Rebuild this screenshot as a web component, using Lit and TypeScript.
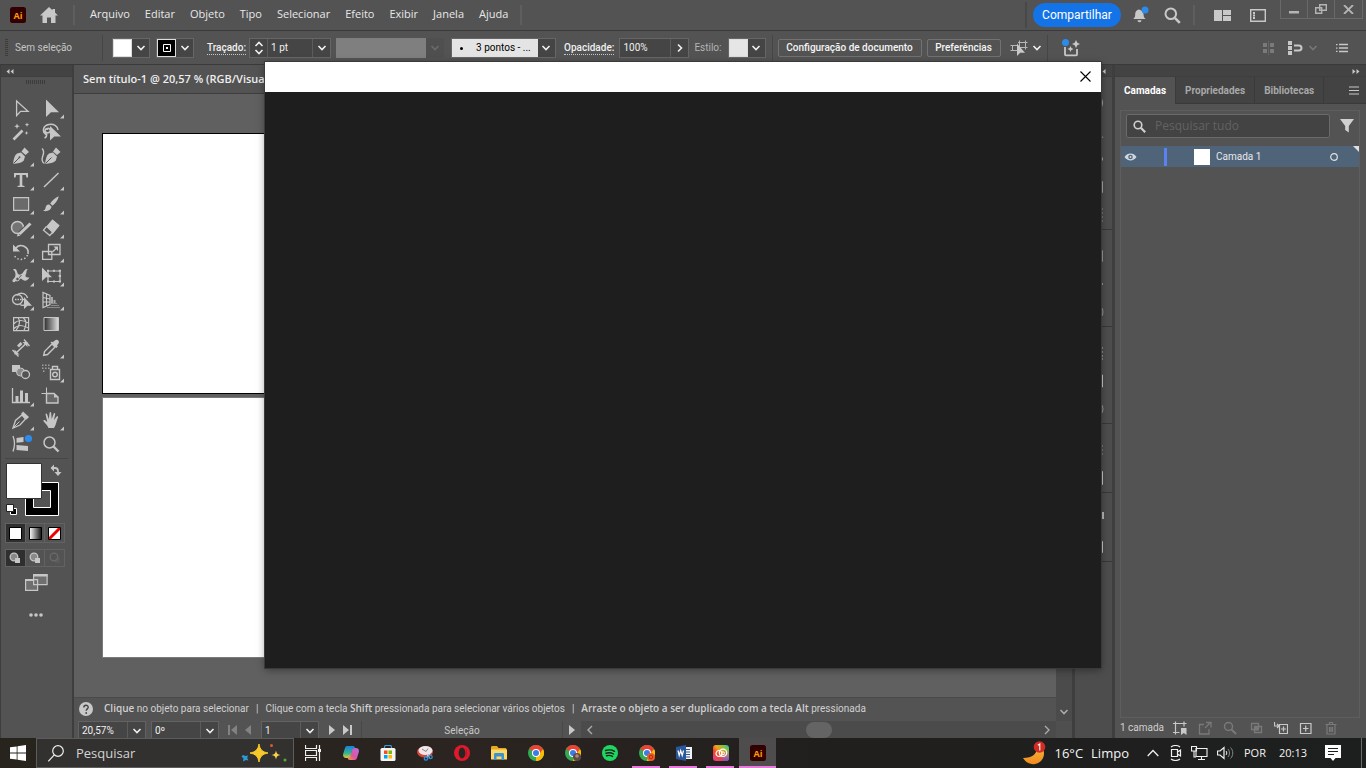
import { LitElement, html, svg, css, nothing, type TemplateResult } from "lit";
import { customElement } from "lit/decorators.js";
import { classMap } from "lit/directives/class-map.js";

const base = css`
  :host {
    display: block;
    box-sizing: border-box;
    min-width: 0;
    color: #dcdcdc;
    font-family: Roboto, "Open Sans", sans-serif;
    font-size: 10px;
    line-height: 14px;
  }
  *, *::before, *::after { box-sizing: border-box; }
  button, input, select {
    font: inherit;
    color: inherit;
    margin: 0;
    padding: 0;
    border: 0;
    background: none;
    border-radius: 0;
    min-width: 0;
  }
  a { color: inherit; text-decoration: none; }
  svg { display: block; flex: none; }
`;

const icon = (w: number, h: number, body: unknown) =>
  html`<svg width=${w} height=${h} viewBox="0 0 ${w} ${h}" fill="none" stroke="none" aria-hidden="true">${body}</svg>`;

const chevron = icon(10, 6, svg`<path d="M1.500 1 5 4.500 8.500 1" stroke="currentColor" stroke-width="1.600"/>`);

const aiLogo = (size: number) => html`<svg width=${size} height=${size} viewBox="0 0 16 16" aria-hidden="true">
  <rect width="16" height="16" rx="2.500" fill="#330000"/>
  <text x="8" y="11.500" text-anchor="middle" font-family="Open Sans, sans-serif" font-weight="700" font-size="9" fill="#ff9a00">Ai</text>
</svg>`;

/* ---------- title bar ---------- */

@customElement("title-bar")
class TitleBar extends LitElement {
  static styles = [base, css`
    :host {
      display: flex;
      align-items: flex-start;
      height: 31px;
      padding-left: 10px;
      padding-right: 3px;
      background: #535353;
      border-bottom: 1px solid #3a3a3a;
      font-family: "Open Sans", sans-serif;
      font-size: 11px;
    }
    .group { display: flex; align-items: center; height: 30px; }
    .home { margin-left: 13px; }
    .bar { width: 2px; height: 20px; background: #5e5e5e; }
    .home + .bar { margin-left: 14px; }
    nav { display: flex; gap: 15px; padding: 0 12px 2px 15px; line-height: 16px; color: #e8e8e8; }
    .spacer { flex: 1; }
    .dark { width: 2px; height: 26px; background: #484848; margin-right: 6px; }
    .share {
      width: 88px;
      height: 24px;
      border-radius: 12px;
      background: #1473e6;
      color: #fff;
      font-size: 12px;
      font-family: Roboto, sans-serif;
    }
    .bell { margin-left: 11px; }
    .find { margin-left: 14px; margin-right: 12px; }
    .layout { margin-left: 19px; }
    .win { display: flex; height: 19px; margin-left: 14px; border: 1px solid #696969; border-top: 0; }
    .win button { width: 27px; display: grid; place-items: center; border-right: 1px solid #696969; }
    .win button:last-child { border: 0; }
  `];
  render() {
    const menus = ["Arquivo", "Editar", "Objeto", "Tipo", "Selecionar", "Efeito", "Exibir", "Janela", "Ajuda"];
    return html`
      <div class="group">
        ${aiLogo(16)}
        <button class="home" aria-label="Início">${icon(20, 18, svg`<path d="M10 1 1 9.500h2.500V17h4.500v-5.500h4V17h4.500V9.500H19L16 6.600V3h-2.500v1.300z" fill="#c8c8c8"/>`)}</button>
        <div class="bar"></div>
        <nav>${menus.map((m) => html`<a href="#">${m}</a>`)}</nav>
        <div class="bar"></div>
      </div>
      <div class="spacer"></div>
      <div class="group">
        <div class="dark"></div>
        <button class="share">Compartilhar</button>
        <button class="bell" aria-label="Notificações">${icon(18, 18, svg`
          <path d="M7 3.500c-3 .6-3.800 3-3.800 5.300 0 2-.6 3-2 4.200h12.400c-1.400-1.200-2-2.200-2-4.200C11.600 6.500 10 4 7 3.500zM5.500 14.200h4a2 2 0 0 1-4 0z" fill="#c8c8c8"/>
          <circle cx="13" cy="4" r="3.500" fill="#2d8ceb"/>`)}</button>
        <button class="find" aria-label="Pesquisar">${icon(17, 17, svg`<circle cx="6.800" cy="6.800" r="5.300" stroke="#c8c8c8" stroke-width="2"/><path d="m10.800 10.800 5 5" stroke="#c8c8c8" stroke-width="2.600"/>`)}</button>
        <div class="bar"></div>
        <button class="layout" aria-label="Organizar documentos">${icon(17, 11, svg`<path d="M0 0h8v11H0zM9 0h8v5H9zM9 6h8v5H9z" fill="#c8c8c8"/>`)}</button>
        <button class="layout" aria-label="Espaço de trabalho">${icon(16, 13, svg`<path d="M.7.700h14.600v11.600H.7z" stroke="#c8c8c8" stroke-width="1.400"/><path d="M3 3h2v2H3zM3 5.500h2v2H3zM3 8h2v2H3z" fill="#c8c8c8"/>`)}</button>
      </div>
      <div class="win">
        <button aria-label="Minimizar">${icon(10, 9, svg`<path d="M0 6h10v2.500H0z" fill="#b4b4b4"/>`)}</button>
        <button aria-label="Restaurar">${icon(12, 10, svg`<path d="M4.700.700h6.600v5.600H4.700zM.7 3.700h6v5.600h-6z" stroke="#b4b4b4" stroke-width="1.400"/>`)}</button>
        <button aria-label="Fechar">${icon(11, 9, svg`<path d="m1 0 9 9M10 0 1 9" stroke="#b4b4b4" stroke-width="1.800"/>`)}</button>
      </div>`;
  }
}

/* ---------- control bar ---------- */

@customElement("control-bar")
class ControlBar extends LitElement {
  static styles = [base, css`
    :host {
      display: flex;
      align-items: center;
      height: 34px;
      padding: 0 18px 0 5px;
      background: #535353;
      border-bottom: 1px solid #3a3a3a;
    }
    .grip { width: 3px; height: 18px; background: repeating-linear-gradient(#3c3c3c 0 1px, #535353 1px 2px); }
    .state { width: 87px; margin-left: 7px; color: #c4c4c4; }
    .sep { width: 1px; height: 26px; background: #464646; }
    .box { display: flex; height: 20px; border: 1px solid #666; background: #454545; }
    .arrow { width: 18px; display: grid; place-items: center; color: #f0f0f0; }
    .swatch { width: 20px; background: #fff; border: 1px solid #ddd; display: grid; place-items: center; }
    .fill { width: 38px; margin-left: 9px; }
    .stroke { width: 38px; margin: 0 13px 0 6px; }
    .stroke .swatch { background: #000; }
    .link { border-bottom: 1px dotted #c8c8c8; line-height: 13px; color: #f0f0f0; font-weight: 500; }
    .weight { width: 82px; margin-left: 3px; }
    .step { width: 18px; display: flex; flex-direction: column; align-items: center; justify-content: space-evenly; border-right: 1px solid #5c5c5c; color: #f0f0f0; }
    .step button { display: block; }
    .flip { transform: scaleY(-1); }
    input { flex: 1; width: 0; padding-left: 3px; color: #f0f0f0; }
    input + .arrow { border-left: 1px solid #5c5c5c; }
    .profile { display: flex; width: 108px; height: 20px; margin-left: 5px; background: linear-gradient(90deg, #7f7f7f 90px, #4f4f4f 90px); justify-content: flex-end; }
    .profile .arrow { color: #6b6b6b; }
    .brush { position: relative; width: 105px; margin: 0 8px 0 7px; }
    .brush select { appearance: none; flex: 1; background: linear-gradient(90deg, #e4e4e4 86px, #454545 86px); color: #000; padding-left: 24px; }
    .brush .dot { position: absolute; left: 8px; top: 8px; width: 3px; height: 3px; border-radius: 2px; background: #000; pointer-events: none; }
    .brush svg { position: absolute; right: 4px; top: 6px; color: #f0f0f0; pointer-events: none; }
    .opacity { width: 70px; margin: 0 5px 0 5px; }
    .dim { color: #b4b4b4; }
    .style { width: 38px; margin: 0 6px 0 6px; }
    .style .swatch { background: #e6e6e6; }
    .wide { height: 18px; border: 1px solid #727272; border-radius: 2px; color: #f4f4f4; font-weight: 500; }
    .doc { width: 144px; margin: 0 5px; }
    .pref { width: 74px; margin-right: 9px; }
    .iso { margin-right: 4px; }
    .iso + .arrow { width: 10px; margin-right: 5px; }
    .ai { margin-left: 14px; }
    .spacer { flex: 1; }
    .tail { display: flex; align-items: center; }
    .snap { margin: 0 4px 0 12px; }
    .gray { color: #777; margin-right: 18px; }
  `];
  render() {
    return html`
      <div class="grip"></div>
      <span class="state">Sem seleção</span>
      <div class="sep"></div>
      <button class="box fill" aria-label="Preenchimento"><span class="swatch"></span><span class="arrow">${chevron}</span></button>
      <button class="box stroke" aria-label="Cor do traçado"><span class="swatch">${icon(8, 8, svg`<path d="M.5.500h7v7h-7z" stroke="#fff"/><path d="M3 3h2v2H3z" fill="#fff"/>`)}</span><span class="arrow">${chevron}</span></button>
      <label class="link" for="weight">Traçado:</label>
      <div class="box weight">
        <span class="step"><button class="flip" aria-label="Aumentar">${chevron}</button><button aria-label="Diminuir">${chevron}</button></span>
        <input id="weight" value="1 pt">
        <button class="arrow" aria-label="Espessuras">${chevron}</button>
      </div>
      <button class="profile" disabled aria-label="Perfil de largura"><span class="arrow">${chevron}</span></button>
      <div class="box brush">
        <span class="dot"></span>
        <select aria-label="Pincel"><option>3 pontos - ...</option></select>
        ${chevron}
      </div>
      <label class="link" for="opacity">Opacidade:</label>
      <div class="box opacity">
        <input id="opacity" value="100%">
        <button class="arrow" aria-label="Opacidade">${icon(6, 10, svg`<path d="M1 1.500 4.500 5 1 8.500" stroke="currentColor" stroke-width="1.600"/>`)}</button>
      </div>
      <span class="dim">Estilo:</span>
      <button class="box style" aria-label="Estilo"><span class="swatch"></span><span class="arrow">${chevron}</span></button>
      <div class="sep"></div>
      <button class="wide doc">Configuração de documento</button>
      <button class="wide pref">Preferências</button>
      <button class="iso" aria-label="Selecionar objetos similares">${icon(18, 16, svg`
        <path d="M2.500 5.500h5v5h-5zM9.500 2.500h6v5h-6z" stroke="#b8b8b8"/><path d="M.5 5.500h2M.5 10.500h2M9.500.500v2M15.500.500v2M15.500 7.500v2M8 2.500h2M15.500 2.500h2M15.500 7.500h2" stroke="#b8b8b8"/>
        <path d="M7 3.500v12.500l3.200-3.200H15z" fill="#c8c8c8"/>`)}</button>
      <button class="arrow" aria-label="Opções">${chevron}</button>
      <div class="sep"></div>
      <button class="ai" aria-label="Gerar">${icon(20, 18, svg`
        <path d="M3 8v7.500c0 .6.200.8.800.8h10.400c.6 0 .8-.2.800-.8V10" stroke="#c8c8c8" stroke-width="1.800"/>
        <path d="m14 1 1.300 2.700L18 5l-2.700 1.300L14 9l-1.300-2.700L10 5l2.700-1.300zM8.500 7l.9 2.100 2.100.9-2.100.9L8.500 13l-.9-2.100-2.100-.9 2.100-.9z" fill="#c8c8c8"/>
        <circle cx="3.500" cy="3.500" r="3.500" fill="#2d8ceb"/>`)}</button>
      <div class="spacer"></div>
      <div class="tail">
        ${icon(14, 14, svg`<path d="M1 2h4v4H1zM8 2h4v4H8zM1 8h4v4H1zM8 8h4v4H8z" fill="#7a7a7a"/><path d="M6.500 0v14" stroke="#686868" stroke-width=".8"/>`)}
        <button class="snap" aria-label="Ajustar">${icon(16, 14, svg`<path d="M0 0h4v4H0zM0 5h4v4H0zM0 10h4v4H0z" fill="#c8c8c8"/><path d="M6 4.500h5a2.400 2.400 0 0 1 0 5H6" stroke="#c8c8c8" stroke-width="2"/>`)}</button>
        <span class="gray">${chevron}</span>
        <button aria-label="Menu">${icon(12, 10, svg`<path d="M3 1.500h9M3 5h9M3 8.500h9" stroke="#c8c8c8" stroke-width="1.400"/><path d="M0 1h1.500v1.300H0zM0 4.400h1.500v1.300H0zM0 7.800h1.500v1.300H0z" fill="#c8c8c8"/>`)}</button>
      </div>`;
  }
}

/* ---------- tools ---------- */

const G = "#c6c6c6";
type Tool = { name: string; art: TemplateResult<2>; more?: boolean };

const tools: Tool[] = [
  { name: "Seleção", art: svg`<path d="M10.600 5v14.500l4-4.200H22z" stroke=${G} stroke-width="1.300"/>` },
  { name: "Seleção direta", more: true, art: svg`<path d="M10 3.500V21l5-4.800h8z" fill=${G}/>` },
  { name: "Varinha mágica", art: svg`<path d="m7.500 19.500 9-9" stroke=${G} stroke-width="2.600"/><path d="m18.500 6 2-2M11 3.500l.8 2 2 .8-2 .8-.8 2-.8-2-2-.8 2-.8zM21 2.500l.6 1.600 1.600.6-1.600.6L21 7l-.6-1.700-1.600-.6 1.600-.6zM20.500 11l.6 1.400 1.400.6-1.400.6-.6 1.400-.6-1.400-1.400-.6 1.400-.6z" fill=${G}/>` },
  { name: "Laço", art: svg`<path d="M10 14.500C6 12 6.500 5.500 13 4.500c5-.8 9 2 9 5.500M12 8.500c-3-.5-4 3-1.500 4s4.500-1 3.500-3-3-1-3 .5M10.500 12.500c.5 3-.5 5-2 5.500" stroke=${G} stroke-width="1.500"/><path d="M14 6v14.500l4.300-4H25z" fill=${G}/>` },
  { name: "Caneta", more: true, art: svg`<path d="M7 20c.5-4.500 1.500-8.500 4-10.500l4-1 4 4-1.200 4C16 19 11.500 19.500 7 20z" fill=${G}/><path d="m15.500 7.500 3-4 4.500 4.500-3.500 3z" fill=${G}/><path d="m7.500 19.500 6-6" stroke="#535353"/><circle cx="13.500" cy="13.300" r="1" fill="#535353"/>` },
  { name: "Curvatura", art: svg`<path d="M9 20c.5-4.500 1.500-8.500 4-10.500l4-1 4 4-1.200 4C18 19 13.500 19.500 9 20z" fill=${G}/><path d="m17 7.500 3-4 4.500 4.500-3.500 3z" fill=${G}/><path d="m9.500 19.500 6-6" stroke="#535353"/><path d="M6 4.500C9 7 7.500 10 6.500 13c-1 3-.5 5 2 6.500" stroke=${G} stroke-width="1.400"/>` },
  { name: "Texto", more: true, art: svg`<path d="M8 5h14v4.500h-1.500L19.800 7h-3.500v10.500l2.200.6V19h-7v-.9l2.200-.6V7h-3.500l-.7 2.500H8z" fill=${G}/>` },
  { name: "Segmento de linha", more: true, art: svg`<path d="M8 19 22.500 5" stroke=${G} stroke-width="1.500"/>` },
  { name: "Retângulo", more: true, art: svg`<path d="M7.600 5.600h15v12.800h-15z" fill="#6a6a6a" stroke=${G} stroke-width="1.200"/>` },
  { name: "Pincel", more: true, art: svg`<path d="M22.800 4.200c-3.500 1.300-6.500 4-8.600 7.300l2.300 2.300c3-2.700 5.500-5.800 6.300-9.600zM13.300 12.500c-2.500-.3-3.500 1.500-3.800 3.500-.2 1.300-1 2.200-2.500 2.800 4 1.200 8-.5 8.600-4z" fill=${G}/>` },
  { name: "Shaper", more: true, art: svg`<circle cx="11.500" cy="11.500" r="6" fill="#747474" stroke=${G} stroke-width="1.500"/><path d="m14 17.500 10.500-10" stroke="#535353" stroke-width="5"/><path d="m13.500 18 11-10.500" stroke=${G} stroke-width="3"/><path d="m10.800 20.500 1.200-3.200 2.500 2.200z" fill=${G}/>` },
  { name: "Borracha", more: true, art: svg`<path d="m16.500 3.500 7 6-7 8.500-7.200-6z" fill=${G}/><path d="m10.500 10.500-3 3.700 6.300 5.300 3-3.500" stroke=${G} fill="#535353" stroke-width="1.300"/><path d="m16.500 3.500 7 6-6.500 8-6.800-6.700z" fill=${G}/>` },
  { name: "Rotação", more: true, art: svg`<path d="M9.500 8.500a7 7 0 0 1 12.500 5.500" stroke=${G} stroke-width="1.600"/><path d="M21.500 15a7.200 7.200 0 0 1-13.500-.5" stroke=${G} stroke-width="1.500" stroke-dasharray="1.500 2"/><path d="M7 4.500v7h7z" fill=${G}/>` },
  { name: "Escala", more: true, art: svg`<path d="M12.500 4.500H24v10H12.500zM6.600 11.500h9.200v7.800H6.600z" stroke=${G} stroke-width="1.300"/><path d="m16.500 12 4-4" stroke=${G} stroke-width="1.300"/><path d="M17.500 6.500H22V11z" fill=${G}/>` },
  { name: "Largura", more: true, art: svg`<path d="M7 5.500c3.500-1.500 3.500 1 4.500 3.500s3.500 2 5.500-.5 2-4 5-3.500c-2 1-1 3-2 5s-1 3.500 3.500 3.500c-1.500 3-4.500 4-6.500 2.500s-2.500-2-4.500 0-4.500 3-6 1.500c-.5-2 1.500-2.500 2.500-4.500s.5-6-2-7.500z" fill=${G}/><path d="m8.500 19 7-8" stroke="#535353"/><circle cx="11.500" cy="15" r="1.800" stroke=${G} fill="#535353"/>` },
  { name: "Transformação livre", more: true, art: svg`<path d="M12 7h12v10.500H12z" stroke=${G} stroke-width="1.200"/><path d="M11 5.700h2v2h-2zM17 5.700h2v2h-2zM22.700 5.700h2.300v2h-2.300zM11 16.500h2v2h-2zM17 16.500h2v2h-2zM22.700 16.500h2.300v2h-2.300zM22.700 11h2.300v2h-2.300z" fill=${G}/><path d="M6 3.500V17l4-3.800h6z" fill=${G}/>` },
  { name: "Criador de formas", more: true, art: svg`<circle cx="11.500" cy="11.500" r="5" stroke=${G} stroke-width="1.300"/><path d="M9 11.500h10" stroke=${G} stroke-width="1.300" stroke-dasharray="1.500 1"/><path d="M11 7.500c2-3.500 9-3 10.500 2.500M14 16.500c1.500 1 3 1 4 .5" stroke=${G} stroke-width="1.400"/><path d="M18 9v12l3.500-3.300H26z" fill=${G}/>` },
  { name: "Grade de perspectiva", more: true, art: svg`<path d="M7 4.500v15l7-3V7.500zM7 9.500l7 1.500M7 14h7M10.500 6v11.500" stroke=${G} stroke-width="1.200"/><path d="M15 9h2v7h-2zM17.500 12h2v4h-2z" fill="#a8a8a8"/><path d="M15 17.500h8M11 19.500h13M15 15.500h6" stroke="#8a8a8a"/>` },
  { name: "Malha", art: svg`<path d="M7.600 5.600h15v13h-15zM7.500 12c5-5 9-4 15-1M7.500 17c5-5 9-4 15-1M12 5.500c3 4 1 9-2 13M17 5.500c5 4 3 9 1 13" stroke=${G} stroke-width="1.200"/>` },
  { name: "Gradiente", art: svg`<defs><linearGradient id="tg"><stop stop-color="#2c2c2c"/><stop offset="1" stop-color="#e0e0e0"/></linearGradient></defs><path d="M8 5.500h14.500v13H8z" fill="url(#tg)" stroke=${G}/>` },
  { name: "Dimensão", art: svg`<path d="m10 17 10-9.500" stroke=${G} stroke-width="1.500"/><path d="M8.500 13.500v5h5zM21.500 11V6h-5z" fill=${G}/><path d="m6.500 14 6 6.500M18 3.500l5.500 6.500" stroke=${G} stroke-width="1.300"/><path d="m11 9.500 2 2 3.500-3.500-2-2z" fill=${G}/>` },
  { name: "Conta-gotas", more: true, art: svg`<path d="m16 8-7.500 7.500-.8 3.800 3.800-.8L19 11z" stroke=${G} stroke-width="1.400"/><path d="m14.500 6.500 1.500-1 1 .8C18.500 4.500 20 3.300 21.600 4c2 1 1.800 3.500-.6 5.300l.8 1.200-1.500 1.500z" fill=${G}/>` },
  { name: "Mesclagem", art: svg`<path d="M6 5h8v7H6z" fill=${G}/><circle cx="14.500" cy="12" r="4" fill="#8a8a8a" stroke=${G}/><circle cx="19.500" cy="14.500" r="4" fill="#535353" stroke=${G} stroke-width="1.300"/>` },
  { name: "Pulverizador", more: true, art: svg`<path d="M14.500 9.500h9v10h-9zM16.500 9V6.500h5V9" stroke=${G} stroke-width="1.400"/><circle cx="19" cy="14.500" r="2.300" stroke=${G} stroke-width="1.400"/><path d="M6 4.500h1.500v1.500H6zM9 4.500h1.500v1.500H9zM12 4.500h1.500v1.500H12zM6 7.500h1.500v1.500H6zM9 7.500h1.500v1.500H9zM12 7.500h1.500v1.500H12zM7 10.500h1.500v1.500H7z" fill="#a0a0a0"/>` },
  { name: "Gráfico", more: true, art: svg`<path d="M6.500 4v14.500H24" stroke=${G} stroke-width="1.300"/><path d="M9.500 12h3v6h-3zM14 6.500h3V18h-3zM19 9h3v9h-3z" fill=${G}/>` },
  { name: "Prancheta", art: svg`<path d="M10.500 9.500H18l4 3.500v6H10.500z" fill="#686868" stroke=${G} stroke-width="1.400"/><path d="M10.500 3.500v6M5.500 9.500h5" stroke=${G}/><path d="M18 9v4.500h4.500z" fill=${G}/>` },
  { name: "Fatia", more: true, art: svg`<path d="m7 20 2.500-7.500L16 7l3.500 4-5.500 6z" stroke=${G} stroke-width="1.300"/><path d="m15 6 2-2.500L23 9l-2.500 2.500z" fill=${G}/><path d="m7.500 19.500 6-6" stroke=${G}/>` },
  { name: "Mão", more: true, art: svg`<path d="M12.500 20c-1-2.500-3-4.500-5-6.700-.5-1.200.8-1.600 1.600-1l2.200 1.800L9.600 6.500c-.2-1.200 1.200-1.300 1.500-.3l1.800 5L13.500 5c.1-1.200 1.600-1.200 1.700 0l.5 6 2-5.500c.4-1 1.700-.6 1.500.4L18 12l2.700-3.400c.7-.8 1.800-.1 1.300.9-1.500 3-1.800 7.500-4 10.500z" fill=${G}/>` },
  { name: "Páginas", art: svg`<path d="M7 4c2 5 2 10 0 15.500" stroke=${G} stroke-width="1.300"/><path d="m10.500 6 7-1v5l-7 .8zM10.500 13l11.500 1v5l-11.500-1z" fill=${G}/><circle cx="22.500" cy="6.500" r="3.600" fill="#2d8ceb"/>` },
  { name: "Zoom", art: svg`<circle cx="13.500" cy="10.500" r="5.500" stroke=${G} stroke-width="1.500"/><path d="m17.500 14.500 5 5" stroke=${G} stroke-width="2.400"/>` },
];

@customElement("tool-panel")
class ToolPanel extends LitElement {
  static styles = [base, css`
    :host {
      display: flex;
      flex-direction: column;
      width: 74px;
      background: #535353;
      border-left: 1px solid #3e3e3e;
      border-right: 2px solid #3e3e3e;
    }
    .head { height: 12px; padding: 4px 5px; background: #434343; border-bottom: 1px solid #3e3e3e; }
    .grip { width: 19px; height: 4px; margin: 3px auto 12px 25px; background: repeating-linear-gradient(90deg, #3c3c3c 0 1px, #535353 1px 2px); }
    .tools { display: grid; grid-template-columns: 30px 30px; padding-left: 5px; }
    .tools button { height: 24px; }
    .rule { height: 1px; margin: 2px 4px 4px; background: #464646; }
    .colors { margin-left: 5px; height: 56px; }
    .modes { display: flex; width: 60px; height: 20px; margin: 4px 0 6px 4px; border: 1px solid #626262; }
    .modes button { flex: 1; display: grid; place-items: center; border-right: 1px solid #626262; }
    .modes button:last-child { border: 0; }
    .modes .on { background: #2f2f2f; }
    .modes + .modes { margin-top: 0; height: 18px; }
    .screen { margin: 1px 0 0 24px; align-self: flex-start; }
    .dots { margin: 21px 0 0 28px; align-self: flex-start; }
  `];
  render() {
    return html`
      <div class="head">${icon(8, 5, svg`<path d="M3.500 0v5L.5 2.500zM7.500 0v5l-3-2.500z" fill="#c8c8c8"/>`)}</div>
      <div class="grip"></div>
      <div class="tools">
        ${tools.map((t) => html`<button aria-label=${t.name}>
          ${icon(30, 24, svg`${t.art}${t.more ? svg`<path d="M28 18.500v4h-4z" fill=${G}/>` : nothing}`)}
        </button>`)}
      </div>
      <div class="rule"></div>
      <div class="colors">${icon(56, 56, svg`
        <path d="M19.500 19.500h33v33h-33z" fill="#000" stroke="#fff"/><path d="M27.500 27.500h17v17h-17z" fill="#535353" stroke="#fff"/>
        <path d="M.5.500h35v35H.5z" fill="#fff" stroke="#333"/>
        <path d="M47 5h2a3 3 0 0 1 3 3v2" stroke=${G} stroke-width="1.800"/><path d="M48 1.500v7L44.500 5zM48.500 9h7L52 13z" fill=${G}/>
        <path d="M4.500 45.500h6v6h-6z" fill="#000" stroke="#fff"/><path d="M.5 41.500h7v7h-7z" fill="#fff" stroke="#222"/>`)}</div>
      <div class="modes">
        <button class="on" aria-label="Cor">${icon(13, 13, svg`<path d="M.5.500h12v12H.5z" fill="#fff" stroke="#000"/>`)}</button>
        <button aria-label="Gradiente">${icon(13, 13, svg`<defs><linearGradient id="mg"><stop stop-color="#fff"/><stop offset="1" stop-color="#111"/></linearGradient></defs><path d="M.5.500h12v12H.5z" fill="url(#mg)" stroke="#000"/>`)}</button>
        <button aria-label="Nenhum">${icon(13, 13, svg`<path d="M.5.500h12v12H.5z" fill="#fff"/><path d="m1 12 11-11" stroke="#f00000" stroke-width="3"/><path d="M.5.500h12v12H.5z" stroke="#000"/>`)}</button>
      </div>
      <div class="modes">
        ${[["#c6c6c6", "on"], ["#c6c6c6", ""], ["#6b6b6b", ""]].map(([c, on], i) => html`<button class=${on} aria-label="Modo de desenho ${i + 1}">
          ${icon(12, 12, svg`<circle cx="5" cy="5" r="3.800" fill="#8a8a8a" fill-opacity=${i === 2 ? 0 : 1} stroke=${c} stroke-width="1.300"/><path d="M6 6h5v5H6z" fill=${c} fill-opacity=${i === 2 ? 0.3 : 1}/>`)}
        </button>`)}
      </div>
      <button class="screen" aria-label="Modo de tela">${icon(23, 17, svg`<path d="M.6 5.600h12v10.800H.6zM8.600.600h13.500v10H8.600z" fill="#6f6f6f" stroke=${G} stroke-width="1.200"/><path d="M8.500.500h14v2h-14zM.5 5h8v2h-8z" fill=${G}/>`)}</button>
      <button class="dots" aria-label="Editar barra de ferramentas">${icon(14, 6, svg`<circle cx="2" cy="3" r="1.800" fill=${G}/><circle cx="7" cy="3" r="1.800" fill=${G}/><circle cx="12" cy="3" r="1.800" fill=${G}/>`)}</button>`;
  }
}

/* ---------- document ---------- */

@customElement("document-area")
class DocumentArea extends LitElement {
  static styles = [base, css`
    :host { display: grid; grid-template: 29px minmax(0, 1fr) 24px 17px / minmax(0, 1fr) 16px; background: #535353; overflow: hidden; }
    .tabs { grid-column: 1 / 3; border-bottom: 1px solid #3e3e3e; background: #434343; }
    .tab { display: inline-block; height: 28px; padding: 6px 24px 0 9px; background: #535353; color: #eee; font: 600 11px/16px "Open Sans", sans-serif; white-space: nowrap; }
    .canvas { position: relative; background: #606060; overflow: hidden; }
    .board { position: absolute; left: 28px; width: 464px; height: 261px; background: #fff; border: 1px solid #7a7a7a; }
    .first { top: 39px; border-color: #000; }
    .second { top: 303px; }
    .vscroll { grid-row: 2 / 4; grid-column: 2; background: #4b4b4b; display: flex; flex-direction: column; justify-content: flex-end; align-items: center; padding-bottom: 6px; color: #aaa; }
    .tips { display: flex; align-items: center; gap: 7px; padding: 0 0 2px 5px; border-top: 1px solid #4a4a4a; color: #d0d0d0; white-space: nowrap; }
    .tips svg { margin-right: 4px; }
    b { font-family: "Open Sans", sans-serif; font-weight: 600; }
    .status { display: flex; padding-left: 4px; overflow: hidden; }
    .combo { display: flex; flex: none; width: 68px; height: 20px; border: 1px solid #626262; background: #454545; color: #f0f0f0; margin-right: 5px; }
    .page { width: 58px; margin: 0 10px; }
    .combo input { flex: 1; width: 0; padding-left: 3px; }
    .combo button { width: 18px; display: grid; place-items: center; border-left: 1px solid #5c5c5c; }
    .nav { display: flex; align-items: center; gap: 8px; }
    .off { opacity: .4; margin-left: 4px; }
    .name { width: 202px; margin-left: 9px; padding-top: 3px; text-align: center; border: 1px solid #484848; border-width: 0 1px; color: #c8c8c8; }
    .play { width: 18px; display: grid; place-items: center; }
    .hscroll { flex: 1; display: flex; align-items: center; padding: 0 6px; background: #4b4b4b; color: #aaa; }
    .thumb { width: 26px; height: 16px; margin: 0 auto; border-radius: 8px; background: #646464; }
    .corner { background: #4f4f4f; }
  `];
  render() {
    const combo = (label: string, value: string, cls: string) => html`<div class="combo ${cls}">
      <input aria-label=${label} value=${value}><button aria-label="${label}: opções">${chevron}</button></div>`;
    const prev = icon(6, 10, svg`<path d="M6 0v10L0 5z" fill="#c8c8c8"/>`);
    const next = icon(6, 10, svg`<path d="M0 0v10l6-5z" fill="#c8c8c8"/>`);
    return html`
      <div class="tabs"><span class="tab">Sem título-1 @ 20,57 % (RGB/Visualização)</span></div>
      <div class="canvas"><div class="board first"></div><div class="board second"></div></div>
      <div class="vscroll">${chevron}</div>
      <div class="tips">
        ${icon(14, 14, svg`<circle cx="7" cy="7" r="7" fill="#c8c8c8"/><path d="M4.800 5.500C4.800 2.500 9.200 2.600 9.200 5.300 9.200 6.800 7.200 7 7.200 8.800" stroke="#444" stroke-width="1.400"/><circle cx="7.200" cy="11" r=".9" fill="#444"/>`)}
        <span><b>Clique</b> no objeto para selecionar</span><span>|</span>
        <span>Clique com a tecla <b>Shift</b> pressionada para selecionar vários objetos</span><span>|</span>
        <span><b>Arraste o objeto a ser duplicado com a tecla Alt</b> pressionada</span>
      </div>
      <div class="status">
        ${combo("Zoom", "20,57%", "")}${combo("Rotação", "0º", "")}
        <div class="nav off">
          <button aria-label="Primeira">${icon(9, 10, svg`<path d="M0 0h2v10H0zM9 0v10L3 5z" fill="#c8c8c8"/>`)}</button>
          <button aria-label="Anterior">${prev}</button>
        </div>
        ${combo("Prancheta", "1", "page")}
        <div class="nav">
          <button aria-label="Próxima">${next}</button>
          <button aria-label="Última">${icon(9, 10, svg`<path d="M7 0h2v10H7zM0 0v10l6-5z" fill="#c8c8c8"/>`)}</button>
        </div>
        <div class="name">Seleção</div>
        <button class="play" aria-label="Mostrar">${next}</button>
        <div class="hscroll">
          ${icon(6, 10, svg`<path d="M5 1 1 5l4 4" stroke="currentColor" stroke-width="1.400"/>`)}
          <div class="thumb"></div>
          ${icon(6, 10, svg`<path d="m1 1 4 4-4 4" stroke="currentColor" stroke-width="1.400"/>`)}
        </div>
      </div>
      <div class="corner"></div>`;
  }
}

/* ---------- collapsed dock ---------- */

@customElement("icon-dock")
class IconDock extends LitElement {
  static styles = [base, css`
    :host { width: 43px; background: #4d4d4d; border: 3px solid #3e3e3e; border-width: 0 3px 0 3px; }
    .head { display: flex; justify-content: flex-end; height: 12px; padding: 4px 6px; background: #434343; border-bottom: 1px solid #3e3e3e; }
    .group { padding: 4px 0 0; border-bottom: 1px solid #383838; }
    .grip { width: 18px; height: 4px; margin: 0 auto 4px; background: repeating-linear-gradient(90deg, #3c3c3c 0 1px, #4d4d4d 1px 2px); }
    .group button { display: grid; place-items: center; width: 100%; height: 28px; }
  `];
  render() {
    const art = [
      [svg`<circle cx="10" cy="9" r="8" stroke="#a8a8a8" stroke-width="2"/>`, svg`<path d="M10 2 19.500 16H1z" fill="#8a8a8a"/>`, svg`<path d="M9 2v14M2 9h17" stroke="#a8a8a8" stroke-width="3"/>`, svg`<path d="M1.500 3.500h17v11h-17z" stroke="#a8a8a8"/>`, svg`<path d="M3 3h16M3 7h16M3 11h16M3 15h16" stroke="#999"/>`],
      [svg`<path d="M1.500 3.500h17v11h-17z" stroke="#999"/>`, svg`<path d="M1 9h18" stroke="#999" stroke-width="2"/>`, svg`<circle cx="11" cy="9" r="8" stroke="#999"/>`],
      [svg`<path d="M2 4h17M2 8h17M2 12h17M2 15h17" stroke="#c8c8c8"/>`, svg`<path d="M2 3h16.500v12H2z" stroke="#c8c8c8"/>`, svg`<circle cx="11" cy="9" r="8" stroke="#999"/>`],
      [svg`<path d="M2 5h17M2 9h17M2 13h17" stroke="#999"/>`, svg`<path d="M2.500 2.500h16v13h-16z" stroke="#c8c8c8"/>`],
      [svg`<path d="M9 2h11v7H9z" fill="#b8b8b8"/><path d="M1 9h17v8H1z" fill="#777"/>`, svg`<path d="M2.500 3.500h16v11h-16z" stroke="#c8c8c8"/>`],
    ];
    return html`
      <div class="head">${icon(8, 5, svg`<path d="M3.500 0v5L.5 2.500zM7.500 0v5l-3-2.500z" fill="#c8c8c8"/>`)}</div>
      ${art.map((g, n) => html`<div class="group"><div class="grip"></div>
        ${g.map((a, i) => html`<button aria-label="Painel ${n + 1}.${i + 1}">${icon(20, 18, a)}</button>`)}</div>`)}`;
  }
}

/* ---------- layers ---------- */

@customElement("layers-panel")
class LayersPanel extends LitElement {
  static styles = [base, css`
    :host { display: flex; flex-direction: column; width: 251px; background: #535353; }
    .head { display: flex; justify-content: flex-end; height: 12px; padding: 4px 6px; background: #434343; border-bottom: 1px solid #3e3e3e; }
    .tabs { display: flex; height: 27px; background: #434343; border-bottom: 1px solid #3a3a3a; }
    .tab { padding: 0 9px; border-right: 1px solid #3a3a3a; color: #a8a8a8; font-weight: 700; line-height: 25px; }
    .on { height: 27px; background: #535353; color: #fff; }
    .menu { margin-left: auto; padding-right: 7px; }
    .body { flex: 1; display: flex; flex-direction: column; min-height: 0; margin: 6px 6px 0 5px; border: 1px solid #5e5e5e; }
    .search { display: flex; align-items: center; gap: 10px; padding: 3px 5px 8px 5px; }
    .field { flex: 1; display: flex; align-items: center; height: 24px; padding-left: 6px; gap: 9px; border: 1px solid #6a6a6a; border-radius: 2px; background: #434343; }
    .field input { flex: 1; width: 0; font: 12px/18px "Open Sans", sans-serif; outline: 0; }
    .field input::placeholder { color: #626262; opacity: 1; }
    .row { display: flex; align-items: center; height: 21px; padding-left: 3px; background: #4f6479; color: #e8e8e8; }
    .mark { width: 3px; height: 18px; margin: 0 27px 0 27px; background: #5b82f0; }
    .thumb { width: 16px; height: 16px; margin-right: 6px; background: #fff; }
    .name { flex: 1; }
    .corner { align-self: flex-start; margin-left: 15px; }
    .foot { display: flex; align-items: center; height: 20px; padding: 0 28px 0 5px; justify-content: space-between; color: #d0d0d0; }
    .foot span { width: 42px; white-space: nowrap; }
    .off { opacity: .22; }
  `];
  render() {
    const foot: [string, boolean, TemplateResult<2>][] = [
      ["Coletar para exportação", false, svg`<path d="M2.500 2.500h8.500v3M2.500 2.500v9h4M0 2.500h2.500M11 2.500h2.500M2.500.500v2M11 .500v2M2.500 11.500v2M0 11.500h2.500" stroke="#c8c8c8" stroke-width="1.200"/><path d="M8 7h5.500v7l-2.700-2L8 14z" fill="#c8c8c8"/>`],
      ["Exportar", true, svg`<path d="M6 3.500H1.500v9.500h9.500V8M7 7l5-5M8 1.500h5v5" stroke="#fff" stroke-width="1.300"/>`],
      ["Localizar", true, svg`<circle cx="5.500" cy="5.500" r="4" stroke="#fff" stroke-width="1.500"/><path d="m8.500 8.500 4.500 4.500" stroke="#fff" stroke-width="2"/>`],
      ["Máscara", true, svg`<path d="M2.500 2.500h7v6h-7zM5.500 5.500h7v6h-7z" stroke="#fff" stroke-width="1.300"/><path d="M5 5.500h5v4H5z" fill="#fff"/>`],
      ["Nova subcamada", false, svg`<path d="M5.500 3.500h8v9h-8zM9.500 5.500v5M7 8h5M.5 1v4H5M3 3l2 2-2 2" stroke="#c8c8c8" stroke-width="1.200"/>`],
      ["Nova camada", false, svg`<path d="M1.500 2.500h10.500v10H1.500zM6.700 4.500v6M4 7.500h5.500" stroke="#c8c8c8" stroke-width="1.200"/>`],
      ["Excluir", true, svg`<path d="M1.500 3.500h11M3 4v9h8V4M5.500 3V1.500h3V3M5.500 6v5M7 6v5M8.500 6v5" stroke="#fff" stroke-width="1.200"/>`],
    ];
    return html`
      <div class="head">${icon(8, 5, svg`<path d="M.5 0v5l3-2.500zM4.500 0v5l3-2.500z" fill="#c8c8c8"/>`)}</div>
      <div class="tabs">
        ${["Camadas", "Propriedades", "Bibliotecas"].map((t, i) => html`<button class=${classMap({ tab: true, on: i === 0 })}>${t}</button>`)}
        <button class="menu" aria-label="Menu do painel">${icon(10, 9, svg`<path d="M0 1h10M0 4.500h10M0 8h10" stroke="#c8c8c8"/>`)}</button>
      </div>
      <div class="body">
        <div class="search">
          <div class="field">
            ${icon(13, 13, svg`<circle cx="5" cy="5" r="3.800" stroke="#d0d0d0" stroke-width="1.600"/><path d="m7.800 7.800 4.400 4.400" stroke="#d0d0d0" stroke-width="2.200"/>`)}
            <input type="text" aria-label="Pesquisar tudo" placeholder="Pesquisar tudo">
          </div>
          <button aria-label="Filtrar">${icon(14, 14, svg`<path d="M0 0h14L8.800 7v6.500L5.200 11V7z" fill="#d0d0d0"/>`)}</button>
        </div>
        <div class="row">
          ${icon(13, 10, svg`<path d="M.5 5c3-4.600 9-4.600 12 0-3 4.600-9 4.600-12 0z" fill="#d0d8e0"/><circle cx="6.500" cy="5" r="2.300" fill="#4f6479"/><circle cx="6.500" cy="5" r="1" fill="#d0d8e0"/>`)}
          <span class="mark"></span><span class="thumb"></span><span class="name">Camada 1</span>
          ${icon(8, 8, svg`<circle cx="4" cy="4" r="3.300" stroke="#e0e0e0" stroke-width="1.200"/>`)}
          <span class="corner">${icon(6, 6, svg`<path d="M0 0h6v6z" fill="#e0e0e0"/>`)}</span>
        </div>
      </div>
      <div class="foot">
        <span>1 camada</span>
        ${foot.map(([n, off, a]) => html`<button class=${classMap({ off })} aria-label=${n}>${icon(14, 14, a)}</button>`)}
      </div>`;
  }
}

/* ---------- taskbar ---------- */

const chrome = svg`<circle cx="8" cy="8" r="8" fill="#34a853"/><path d="M8 8 1.100 4A8 8 0 0 1 15 4z" fill="#ea4335"/><path d="M8 8 15 4a8 8 0 0 1-7 12z" fill="#fbbc05"/><path d="M8 4h7l-3 4z" fill="#ea4335"/><circle cx="8" cy="8" r="4" fill="#fff"/><circle cx="8" cy="8" r="3" fill="#3b7de8"/>`;

const apps: { name: string; art: TemplateResult<2>; open?: boolean; active?: boolean }[] = [
  { name: "Copilot", art: svg`<defs><linearGradient id="cp" x1="0" y1="0" x2="0" y2="1"><stop stop-color="#1a7fe0"/><stop offset=".6" stop-color="#35b58c"/><stop offset="1" stop-color="#e8c53a"/></linearGradient><linearGradient id="cq" x1="1" y1="0" x2="0" y2="1"><stop stop-color="#b06ee8"/><stop offset=".6" stop-color="#e0559c"/><stop offset="1" stop-color="#f59a4a"/></linearGradient></defs><path d="M11 3h2c2.500 0 3.500 2 2.700 4.500L14 13c-.4 1.200-1 2-2.500 2H7c-1.500 0-2-1-2.300-2 2-.3 2.500-2 3.300-5s1-5 3-5z" fill="url(#cq)"/><path d="M4 1h6c1.500 0 1.700 1 2 2-2 0-2.700 1-3.300 3.500C8 10 7.500 13 5 13H3C.5 13-.5 11 .3 8.500L2 3c.4-1.200 1-2 2-2z" fill="url(#cp)"/>` },
  { name: "Microsoft Store", art: svg`<path d="M4.500 4V2c0-1 .5-1.500 1.500-1.500h4c1 0 1.500.5 1.500 1.500v2" stroke="#3ba0d8" stroke-width="1.200"/><rect x=".5" y="3" width="15" height="13" rx="1.500" fill="#f4f4f4"/><path d="M4 5.500h3.500V9H4z" fill="#f25022"/><path d="M8.500 5.500H12V9H8.500z" fill="#7fba00"/><path d="M4 10h3.500v3.500H4z" fill="#00a4ef"/><path d="M8.500 10H12v3.500H8.500z" fill="#ffb900"/>` },
  { name: "Captura", art: svg`<ellipse cx="8" cy="7" rx="8" ry="5.500" fill="#d8453a"/><ellipse cx="8.500" cy="5.500" rx="7" ry="4.500" fill="#f0e8e8"/><path d="m5 4 4 2.500 2-3" stroke="#888"/><path d="m9 9 4 4M13.500 8.500 9.500 13" stroke="#c8d4e0"/><circle cx="9" cy="13.500" r="1.700" stroke="#2a8fd8" stroke-width="1.300"/><circle cx="13.500" cy="12" r="1.700" stroke="#2a8fd8" stroke-width="1.300"/>` },
  { name: "Opera", art: svg`<circle cx="8" cy="8" r="8" fill="#e0192c"/><ellipse cx="8" cy="8" rx="3.400" ry="5.400" fill="#2a2422"/><path d="M11 2.500a8 8 0 0 1 0 11c2-3 2-8 0-11z" fill="#a01020"/>` },
  { name: "Explorador", art: svg`<path d="M0 2.500C0 1.500.5 1 1.500 1H6l1.500 2H14c1 0 1.500.5 1.500 1.500V14H0z" fill="#e8a820"/><path d="M0 4.500h16v10H0z" fill="#fbd868"/><path d="M3 15V9.500C3 8.500 3.500 8 4.500 8h7c1 0 1.500.5 1.500 1.500V15h-2.500v-3.500h-5V15z" fill="#3a94d0"/>` },
  { name: "Chrome", art: chrome },
  { name: "Chrome perfil", art: svg`${chrome}<circle cx="12" cy="12" r="4" fill="#5a4a48"/><circle cx="12" cy="11" r="1.800" fill="#b08a78"/>` },
  { name: "Spotify", art: svg`<circle cx="8" cy="8" r="8" fill="#1ed760"/><path d="M3.500 5.500c3-.9 6.500-.6 9 .8M4 8.200c2.600-.7 5.500-.4 7.600.8M4.500 10.700c2-.5 4.300-.3 6 .7" stroke="#1c1c1c" stroke-width="1.400" stroke-linecap="round"/>` },
  { name: "Chrome janela", open: true, art: svg`${chrome}<circle cx="12" cy="12" r="4" fill="#f05a28"/><circle cx="12" cy="12" r="1.800" stroke="#a83010"/>` },
  { name: "Word", open: true, art: svg`<path d="M8 2h8v12H8z" fill="#f4f4f4"/><path d="M10 4.500h4M10 7h4M10 9.500h4M10 12h4" stroke="#2b579a"/><path d="M0 2 10 0v16L0 14z" fill="#2b579a"/><path d="m2 5.500 1.200 5 1.500-5 1.500 5 1.300-5" stroke="#fff" stroke-width="1.200"/>` },
  { name: "Creative Cloud", open: true, art: svg`<defs><linearGradient id="cc" x1="0" y1="1" x2="1" y2="0"><stop stop-color="#e83a9a"/><stop offset=".35" stop-color="#f0452a"/><stop offset=".55" stop-color="#f5a020"/><stop offset=".8" stop-color="#78c83a"/><stop offset="1" stop-color="#28a8e0"/></linearGradient><radialGradient id="cd" cx="1" cy="1" r=".7"><stop stop-color="#4a50f0"/><stop offset="1" stop-color="#b040e0" stop-opacity="0"/></radialGradient></defs><rect width="16" height="16" rx="3" fill="url(#cc)"/><rect width="16" height="16" rx="3" fill="url(#cd)"/><circle cx="6" cy="8.500" r="3" stroke="#fff" stroke-width="1.200"/><circle cx="10" cy="7.800" r="3.700" stroke="#fff" stroke-width="1.200"/><circle cx="10" cy="8.300" r="1.500" stroke="#fff"/>` },
  { name: "Illustrator", open: true, active: true, art: svg`<rect width="16" height="16" rx="2.500" fill="#330000"/><text x="8" y="11.500" text-anchor="middle" font-family="Open Sans, sans-serif" font-weight="700" font-size="9" fill="#ff9a00">Ai</text>` },
];

@customElement("task-bar")
class TaskBar extends LitElement {
  static styles = [base, css`
    :host {
      display: flex;
      align-items: center;
      height: 30px;
      padding-right: 4px;
      background: linear-gradient(90deg, #26241c 0, #2b2421 34%, #211f1e 60%, #1d1f1f);
      color: #f4f4f4;
      font-family: "Open Sans", sans-serif;
      font-size: 13px;
      line-height: 18px;
    }
    .start { width: 36px; display: grid; place-items: center; }
    .search { display: flex; align-items: center; width: 258px; height: 30px; padding: 0 6px 0 11px; border: 1px solid #5c5c5c; background: #323130; }
    .search input { flex: 1; width: 0; margin-left: 12px; outline: 0; }
    .search input::placeholder { color: #d4d4d4; opacity: 1; }
    .view { width: 38px; display: grid; place-items: center; }
    .app { position: relative; display: grid; place-items: center; width: 37px; height: 30px; }
    .open::after { content: ""; position: absolute; left: 4px; right: 5px; bottom: 0; height: 2px; background: #e878dc; }
    .active { width: 37px; background: #4e4c4c; }
    .active::after { left: 0; right: 0; }
    .spacer { flex: 1; }
    .weather { display: flex; align-items: center; gap: 8px; margin-right: 18px; }
    .tray { display: flex; align-items: center; gap: 9px; margin-right: 10px; }
    .text { font-size: 11px; }
    .clock { margin: 0 18px 0 13px; }
    .edge { width: 1px; height: 30px; margin-left: 20px; background: #6a6a6a; }
  `];
  render() {
    return html`
      <button class="start" aria-label="Iniciar">${icon(16, 16, svg`<path d="M0 2.300 6.700 1.400v6.200H0zM7.500 1.200 16 0v7.600H7.500zM0 8.400h6.700v6.200L0 13.700zM7.500 8.400H16V16l-8.500-1.200z" fill="#fff"/>`)}</button>
      <div class="search">
        ${icon(16, 17, svg`<circle cx="10" cy="6" r="5.300" stroke="#eee" stroke-width="1.200"/><path d="m6.300 9.800-6 6.500" stroke="#eee" stroke-width="1.200"/>`)}
        <input type="text" aria-label="Pesquisar no Windows" placeholder="Pesquisar">
        ${icon(46, 20, svg`<path d="M18 1c.8 5.500 3.500 8 9 9-5.500 1-8.200 3.500-9 9-.8-5.500-3.500-8-9-9 5.500-1 8.200-3.500 9-9z" fill="#f8c828" stroke="#f8c828"/><path d="M35 7.500c.4 2.800 1.700 4.100 4.500 4.500-2.800.4-4.100 1.700-4.500 4.500-.4-2.800-1.700-4.100-4.500-4.500 2.800-.4 4.100-1.700 4.500-4.500z" fill="#f8d048"/><path d="m2 12 2.500 1L7 12.500 6.200 15l1.300 2.500L5 17l-3 1.500.5-3L.5 13.500z" fill="#2a9ad8"/><circle cx="30.500" cy="2.500" r="1.500" fill="#e0582a"/><circle cx="44" cy="17" r="1.500" fill="#58a838"/>`)}
      </div>
      <button class="view" aria-label="Visão de tarefas">${icon(17, 16, svg`<path d="M.5 0v3.500h11V0M.5 5.500h11v5H.5zM.5 16v-3.500h11V16M14.500 0v16" stroke="#f0f0f0" stroke-width="1.200"/><path d="M13 4h3v3h-3z" fill="#f0f0f0"/>`)}</button>
      ${apps.map((a) => html`<button class=${classMap({ app: true, open: !!a.open, active: !!a.active })} aria-label=${a.name}>${icon(16, 16, a.art)}</button>`)}
      <div class="spacer"></div>
      <button class="weather">
        ${icon(24, 24, svg`<defs><linearGradient id="mn" x1="0" y1="0" x2="0" y2="1"><stop stop-color="#f8b840"/><stop offset="1" stop-color="#f08a1c"/></linearGradient></defs><path d="M15 5c1 6-3 12-14 12 4 7 13 8 18 3 4-4 4-11 0-15z" fill="url(#mn)"/><circle cx="17.500" cy="6" r="5.800" fill="#d02c24"/><path d="m15.800 4.200 2-1.200v6.500" stroke="#fff" stroke-width="1.100"/>`)}
        <span>16°C</span><span>Limpo</span>
      </button>
      <div class="tray">
        ${icon(12, 8, svg`<path d="m.7 7 5.300-5.500L11.300 7" stroke="#f0f0f0" stroke-width="1.300"/>`)}
        ${icon(14, 16, svg`<path d="M3.500 4.500h6v7h-6zM9.500 7l3-2v6l-3-2M3 2c2.500-2 6.500-2 9 0M3 14c2.500 2 6.500 2 9 0" stroke="#f0f0f0" stroke-width="1.200"/>`)}
        ${icon(17, 15, svg`<path d="M5 2.500h11v8H5zM10.500 10.500v3M7 13.500h7M.5.500h5v4.500h-5zM3 5v6h2" stroke="#f0f0f0" stroke-width="1.100"/>`)}
        ${icon(17, 14, svg`<path d="M.5 5h2.500l4-3.500v11L3 9H.5z" stroke="#f0f0f0" stroke-width="1.200"/><path d="M9 5c1 1 1 3 0 4" stroke="#f0f0f0"/><path d="M11 3c2 2.200 2 5.800 0 8M13.500 1.500c3 3 3 8 0 11" stroke="#888"/>`)}
      </div>
      <span class="text">POR</span>
      <span class="text clock">20:13</span>
      <button aria-label="Notificações">${icon(16, 16, svg`<path d="M0 0h16v13h-5.500L8 16l-2.500-3H0z" fill="#fff"/><path d="M3 3.500h10M3 6.500h10M3 9.500h6" stroke="#1d1f1f" stroke-width="1.200"/>`)}</button>
      <div class="edge"></div>`;
  }
}

/* ---------- root ---------- */

@customElement("app-root")
class AppRoot extends LitElement {
  static styles = [base, css`
    :host { display: flex; flex-direction: column; height: 100vh; overflow: hidden; background: #535353; }
    .work { flex: 1; display: flex; min-height: 0; }
    document-area { flex: 1; }
    title-bar, control-bar, task-bar, tool-panel, icon-dock, layers-panel { flex: none; }
    .dialog {
      position: fixed;
      inset: 62px 265px 100px;
      display: flex;
      flex-direction: column;
      background: #1e1e1e;
      box-shadow: 0 0 0 1px #3a3a3a, 0 2px 8px rgba(0, 0, 0, .4);
    }
    .caption { display: flex; justify-content: flex-end; height: 30px; background: #fff; }
    .caption button { width: 31px; height: 28px; display: grid; place-items: center; }
  `];
  render() {
    return html`
      <title-bar></title-bar>
      <control-bar></control-bar>
      <div class="work">
        <tool-panel></tool-panel>
        <document-area></document-area>
        <icon-dock></icon-dock>
        <layers-panel></layers-panel>
      </div>
      <task-bar></task-bar>
      <div class="dialog" role="dialog" aria-label="Janela">
        <div class="caption"><button aria-label="Fechar">${icon(11, 11, svg`<path d="m.5.500 10 10M10.500.500l-10 10" stroke="#000" stroke-width="1.100"/>`)}</button></div>
      </div>`;
  }
}
